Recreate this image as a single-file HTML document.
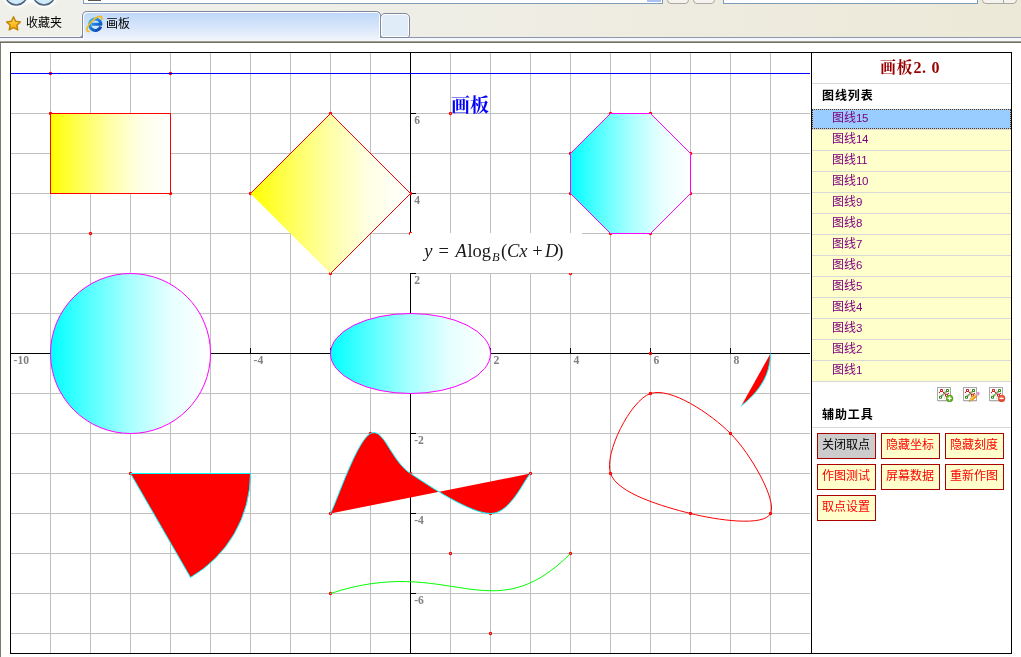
<!DOCTYPE html>
<html lang="zh-CN"><head><meta charset="utf-8"><title>画板</title>
<style>
html,body{margin:0;padding:0;background:#fff}
body{width:1021px;height:657px;position:relative;overflow:hidden;font-family:"Liberation Sans","Noto Sans CJK SC",sans-serif;font-size:12px;color:#000}
#wrap{position:absolute;left:0;top:0;width:1021px;height:657px;will-change:transform}
#cv{position:absolute;left:0;top:0}
.abs{position:absolute}
#tb{position:absolute;left:0;top:0;width:1021px;height:37px;background:linear-gradient(to right,#f0f0eb 0,#efeee6 40%,#ece9d8 100%)}
#l37{position:absolute;left:0;top:37px;width:1021px;height:1px;background:#8e96ae}
#l38{position:absolute;left:0;top:38px;width:1021px;height:3px;background:#f4f7fc}
#l41{position:absolute;left:0;top:41px;width:1021px;height:2px;background:linear-gradient(to bottom,#a5a291 0,#a5a291 1px,#716f64 1px)}
#lb{position:absolute;left:0;top:43px;width:1px;height:614px;background:#7b786c}
.inp{position:absolute;top:-11px;height:13px;background:#fff;border:1px solid #7f9db9}
.nb{position:absolute;top:-21px;height:23px;border:1px solid #a9a9a0;border-radius:4px;background:#f4f3ee}
.circ{position:absolute;top:-18.6px;width:22px;height:22px;border-radius:50%;border:1.5px solid #5a6b82;background:radial-gradient(circle at 50% 70%,#e8f8fd,#bfe3f4);box-shadow:0 0 2px 2px #fff}
#favbox{position:absolute;left:-2px;top:15px;width:83px;height:22px;border:1px solid #8088a0;border-top:none;border-radius:0 0 4px 0;box-shadow:inset -1px -1px 0 #f8f8f2}
#fav{position:absolute;left:26px;top:16.3px;font-size:12px;line-height:14px}
#tab{position:absolute;left:82px;top:11px;width:297px;height:29px;border:1px solid #8088a0;border-bottom:none;border-radius:5px 5px 0 0;background:linear-gradient(to bottom,#bdd7f9 0,#d6e5fa 50%,#f3f6fc 100%);box-shadow:inset 1px 1px 0 #fff,inset -1px 0 0 #fff}
#tab span{position:absolute;left:23px;top:5px;font-size:12px;line-height:14px}
#ntab{position:absolute;left:380px;top:13px;width:28px;height:23px;border:1px solid #8088a0;border-radius:5px 5px 3px 3px;background:#e1ecf9;box-shadow:inset 0 0 0 1px #fff}
.patch{position:absolute;top:38px;width:1px;height:3px;background:#f4f7fc}
#title{position:absolute;left:811px;top:57.8px;width:198px;text-align:center;font-family:"Liberation Serif","Noto Serif CJK SC",serif;font-weight:bold;font-size:16px;line-height:20px;color:#990000;letter-spacing:.5px}
#title i{font-style:normal;display:inline-block;width:9px;text-align:center;letter-spacing:0}
.hl{position:absolute;left:812px;width:199px;height:1px;background:#d8d8d8}
.hd{position:absolute;left:822px;font-weight:bold;font-size:12px;line-height:14px;letter-spacing:.9px}
#list{position:absolute;left:812px;top:109px;width:199px}
.it{height:20px;border-bottom:1px solid #d8d8d8;background:#ffffcc;color:#800080;line-height:18px;padding-left:20px;box-sizing:content-box;font-size:12px}
.it b{font-weight:normal;font-size:11.5px;letter-spacing:-.39px}
.it.sel{background:#99ccff;height:18px;border:1px dotted #663300;padding-left:19px;margin-bottom:1px;line-height:16px;box-shadow:0 1px 0 #d8d8d8}
.bt{position:absolute;width:56px;height:24px;padding-right:1px;border:1px solid #aa0000;background:#ffffcc;color:#ff0000;text-align:center;line-height:23px;font-size:12px}
.bt.g{background:#cccccc;color:#000}
</style></head><body><div id="wrap">
<svg id="cv" width="1021" height="657" viewBox="0 0 1021 657">
<defs>
<linearGradient id="gy" x1="0" y1="0" x2="1" y2="0"><stop offset="0" stop-color="#ffff00"/><stop offset=".25" stop-color="#ffff58"/><stop offset=".5" stop-color="#ffffa8"/><stop offset=".75" stop-color="#ffffe6"/><stop offset="1" stop-color="#ffffff"/></linearGradient>
<linearGradient id="gc" x1="0" y1="0" x2="1" y2="0"><stop offset="0" stop-color="#00ffff"/><stop offset=".25" stop-color="#58ffff"/><stop offset=".5" stop-color="#a8ffff"/><stop offset=".75" stop-color="#e6ffff"/><stop offset="1" stop-color="#ffffff"/></linearGradient>
</defs>
<path d="M50.5 53V653M90.5 53V653M130.5 53V653M170.5 53V653M210.5 53V653M250.5 53V653M290.5 53V653M330.5 53V653M370.5 53V653M450.5 53V653M490.5 53V653M530.5 53V653M570.5 53V653M610.5 53V653M650.5 53V653M690.5 53V653M730.5 53V653M770.5 53V653M11 113.5H810M11 153.5H810M11 193.5H810M11 233.5H810M11 273.5H810M11 313.5H810M11 393.5H810M11 433.5H810M11 473.5H810M11 513.5H810M11 553.5H810M11 593.5H810M11 633.5H810" stroke="#c0c0c0" stroke-width="1" fill="none" shape-rendering="crispEdges"/>
<path d="M11 353.5H810M410.5 53V653" stroke="#000" stroke-width="1" fill="none" shape-rendering="crispEdges"/>
<path d="M90.5 348V353M170.5 348V353M250.5 348V353M330.5 348V353M410.5 348V353M490.5 348V353M570.5 348V353M650.5 348V353M730.5 348V353M411 113.5H416M411 193.5H416M411 273.5H416M411 433.5H416M411 513.5H416M411 593.5H416" stroke="#000" stroke-width="1" fill="none" shape-rendering="crispEdges"/>
<g font-family="'Liberation Serif','Noto Serif CJK SC',serif" font-size="11.6" font-weight="bold" fill="#808080"><text x="13.6" y="363.9">-10</text><text x="93.6" y="363.9">-8</text><text x="173.6" y="363.9">-6</text><text x="253.6" y="363.9">-4</text><text x="333.6" y="363.9">-2</text><text x="493.6" y="363.9">2</text><text x="573.6" y="363.9">4</text><text x="653.6" y="363.9">6</text><text x="733.6" y="363.9">8</text><text x="414.2" y="123.8">6</text><text x="414.2" y="203.8">4</text><text x="414.2" y="283.8">2</text><text x="414.2" y="443.8">-2</text><text x="414.2" y="523.8">-4</text><text x="414.2" y="603.8">-6</text></g>
<g fill="none" stroke="#ff0000" stroke-width="1.2"><circle cx="50.5" cy="73.5" r="1.1"/><circle cx="170.5" cy="73.5" r="1.1"/><circle cx="50.5" cy="113.5" r="1.1"/><circle cx="170.5" cy="193.5" r="1.1"/><circle cx="90.5" cy="233.5" r="1.1"/><circle cx="250.5" cy="193.5" r="1.1"/><circle cx="330.5" cy="113.5" r="1.1"/><circle cx="410.5" cy="193.5" r="1.1"/><circle cx="330.5" cy="273.5" r="1.1"/><circle cx="450.5" cy="113.5" r="1.1"/><circle cx="610.5" cy="113.5" r="1.1"/><circle cx="650.5" cy="113.5" r="1.1"/><circle cx="690.5" cy="153.5" r="1.1"/><circle cx="690.5" cy="193.5" r="1.1"/><circle cx="650.5" cy="233.5" r="1.1"/><circle cx="610.5" cy="233.5" r="1.1"/><circle cx="570.5" cy="193.5" r="1.1"/><circle cx="570.5" cy="153.5" r="1.1"/><circle cx="410.5" cy="233.5" r="1.1"/><circle cx="570.5" cy="273.5" r="1.1"/><circle cx="650.5" cy="353.5" r="1.1"/><circle cx="650.5" cy="393.5" r="1.1"/><circle cx="730.5" cy="433.5" r="1.1"/><circle cx="770.5" cy="513.5" r="1.1"/><circle cx="690.5" cy="513.5" r="1.1"/><circle cx="610.5" cy="473.5" r="1.1"/><circle cx="130.5" cy="473.5" r="1.1"/><circle cx="330.5" cy="513.5" r="1.1"/><circle cx="370.5" cy="433.5" r="1.1"/><circle cx="410.5" cy="473.5" r="1.1"/><circle cx="490.5" cy="513.5" r="1.1"/><circle cx="530.5" cy="473.5" r="1.1"/><circle cx="330.5" cy="593.5" r="1.1"/><circle cx="450.5" cy="553.5" r="1.1"/><circle cx="490.5" cy="633.5" r="1.1"/><circle cx="570.5" cy="553.5" r="1.1"/></g>
<path d="M11 73.5H810" stroke="#0000ff" fill="none" shape-rendering="crispEdges"/>
<rect x="50.5" y="113.5" width="120" height="80" fill="url(#gy)" stroke="#ff0000" shape-rendering="crispEdges"/>
<path d="M250.5 193.5L330.5 113.5L410.5 193.5L330.5 273.5Z" fill="url(#gy)"/>
<path d="M250.5 193.5L330.5 113.5L410.5 193.5L330.5 273.5" fill="none" stroke="#ff0000"/>
<path d="M610.5 113.5H650.5L690.5 153.5V193.5L650.5 233.5H610.5L570.5 193.5V153.5Z" fill="url(#gc)" stroke="#ff00ff"/>
<circle cx="130.5" cy="353.5" r="80" fill="url(#gc)" stroke="#ff00ff"/>
<ellipse cx="410.5" cy="353.5" rx="80" ry="40" fill="url(#gc)" stroke="#ff00ff"/>
<rect x="410" y="233" width="172" height="40" fill="#fff"/>
<g font-family="'Liberation Serif',serif" font-size="18.5" fill="#1a1a1a"><text y="257.3"><tspan x="424.3" font-style="italic">y</tspan><tspan x="438.6">=</tspan><tspan x="455.6" font-style="italic">A</tspan><tspan x="467.4">log</tspan><tspan x="492" y="261.2" font-size="12.5" font-style="italic">B</tspan><tspan x="501" y="257.3">(</tspan><tspan x="507" font-style="italic">Cx</tspan><tspan x="532.3">+</tspan><tspan x="545" font-style="italic">D</tspan><tspan x="557.2">)</tspan></text></g>
<path d="M130.5 473.5H250.5A120 120 0 0 1 190.5 577.42Z" fill="#ff0000" stroke="#00ffff" stroke-width="1"/>
<path d="M330.5 513.5 C337.17 500.17 357.17 440.17 370.5 433.5 C383.83 426.83 390.5 460.17 410.5 473.5 C430.5 486.83 470.5 513.5 490.5 513.5 C510.5 513.5 523.83 480.17 530.5 473.5Z" fill="#ff0000"/>
<path d="M330.5 513.5 C337.17 500.17 357.17 440.17 370.5 433.5 C383.83 426.83 390.5 460.17 410.5 473.5 C430.5 486.83 470.5 513.5 490.5 513.5 C510.5 513.5 523.83 480.17 530.5 473.5" fill="none" stroke="#00ffff"/>
<path d="M650.5 393.5 C670.5 386.83 710.5 413.5 730.5 433.5 C750.5 453.5 777.17 500.17 770.5 513.5 C763.83 526.83 717.17 520.17 690.5 513.5 C663.83 506.83 617.17 493.5 610.5 473.5 C603.83 453.5 630.5 400.17 650.5 393.5Z" fill="none" stroke="#ff0000"/>
<path d="M770.5 353.5A120 80 0 0 1 741.2 405.88Z" fill="#ff0000"/>
<path d="M770.5 353.5A120 80 0 0 1 741.2 405.88" fill="none" stroke="#00ffff"/>
<path d="M330.5 593.5C450.5 553.5 490.5 633.5 570.5 553.5" fill="none" stroke="#00ff00"/>
<text x="451" y="112" font-family="'Liberation Serif','Noto Serif CJK SC',serif" font-size="19" font-weight="bold" fill="#0000ff">画板</text>
<path d="M10.5 52.5H1011.5V653.5H10.5ZM811.5 52.5V653.5" fill="none" stroke="#000" shape-rendering="crispEdges"/>
</svg>
<div id="tb">
<svg class="abs" style="left:0;top:0" width="70" height="12" viewBox="0 0 70 12"><defs><filter id="bl" x="-20%" y="-20%" width="140%" height="140%"><feGaussianBlur stdDeviation="1.2"/></filter></defs><g filter="url(#bl)" fill="#fff" opacity=".9"><circle cx="16.2" cy="-6.3" r="14"/><circle cx="44" cy="-6.3" r="14"/><rect x="16" y="-6" width="28" height="9"/></g><g fill="#cdebf8" stroke="#51647f" stroke-width="1.5"><circle cx="16.2" cy="-6.3" r="11.2"/><circle cx="44" cy="-6.3" r="11.2"/></g></svg>
<div class="inp" style="left:83px;width:578px"><div class="abs" style="left:4px;top:10px;width:13px;height:1px;background:#555"></div><div class="abs" style="left:563px;top:10px;width:14px;height:2px;background:#a9c1f2"></div></div>
<div class="nb" style="left:667px;width:20px"></div><div class="nb" style="left:693px;width:20px"></div>
<div class="inp" style="left:723px;width:253px"></div>
<div class="nb" style="left:982px;width:33px"><div class="abs" style="left:20px;top:0;width:1px;height:23px;background:#a9a9a0"></div></div>
</div>
<div id="l37"></div><div id="l38"></div>
<div id="favbox"></div>
<svg class="abs" style="left:2px;top:12px" width="24" height="24" viewBox="0 0 24 24"><defs><linearGradient id="sg" x1="0" y1="0" x2="0" y2="1"><stop offset="0" stop-color="#ffe98a"/><stop offset=".45" stop-color="#ffc533"/><stop offset="1" stop-color="#ffa000"/></linearGradient></defs><path d="M11.50 4.90L13.56 9.27L18.35 9.88L14.83 13.18L15.73 17.92L11.50 15.60L7.27 17.92L8.17 13.18L4.65 9.88L9.44 9.27Z" fill="url(#sg)" stroke="#c0860a" stroke-width="1.5" stroke-linejoin="round"/></svg>
<div id="fav">收藏夹</div>
<div id="tab"><svg class="abs" style="left:1px;top:1.4px" width="22" height="22" viewBox="0 0 22 22"><defs><linearGradient id="eg" x1="0" y1="0" x2="1" y2="1"><stop offset="0" stop-color="#35b4f8"/><stop offset=".5" stop-color="#1679dc"/><stop offset="1" stop-color="#0a3aa5"/></linearGradient></defs>
<path d="M16.7 13.6A5.7 5.7 0 1 1 17 11.2H7.6" fill="none" stroke="url(#eg)" stroke-width="3" stroke-linejoin="round"/>
<ellipse cx="10.4" cy="10.9" rx="10" ry="3.7" transform="rotate(-45 10.4 10.9)" fill="none" stroke="#f5b918" stroke-width="1.7" stroke-dasharray="3.5 16.5 27.6"/></svg><span>画板</span></div>
<div id="ntab"></div><div class="patch" style="left:82px"></div><div class="patch" style="left:380px"></div>
<div id="l41"></div><div id="lb"></div>
<div id="title">画板<i>2</i><i style="text-align:left">.</i><i>0</i></div>
<div class="hl" style="top:83px"></div>
<div class="hd" style="top:88.5px">图线列表</div>
<div id="list"><div class="it sel">图线<b>15</b></div><div class="it">图线<b>14</b></div><div class="it">图线<b>11</b></div><div class="it">图线<b>10</b></div><div class="it">图线<b>9</b></div><div class="it">图线<b>8</b></div><div class="it">图线<b>7</b></div><div class="it">图线<b>6</b></div><div class="it">图线<b>5</b></div><div class="it">图线<b>4</b></div><div class="it">图线<b>3</b></div><div class="it">图线<b>2</b></div><div class="it">图线<b>1</b></div></div>
<svg style="position:absolute;left:935px;top:385px" width="20" height="20" viewBox="0 0 20 20"><rect x="2.5" y="2.5" width="13" height="13" fill="#fff" stroke="#a9a9a9"/><path d="M3 16.4H15.6" stroke="#d4d4d4" stroke-width=".7"/>
<path d="M9.5 4V8M4.5 9.5H7.5M9.5 11.5V14" stroke="#e2e2e6" stroke-width="1" fill="none"/>
<path d="M4.4 7.5L6.5 5.5L8.5 7.5L11.4 10.2L13.4 8.4" stroke="#e05050" stroke-width=".8" fill="none"/>
<path d="M5.5 12.3L12.5 5.5" stroke="#2a7a10" stroke-width="1.25" stroke-dasharray="1.1 .35" fill="none"/>
<rect x="5" y="4" width="3" height="3" rx=".8" fill="#d11f1f"/><rect x="6" y="5" width="1" height="1" fill="#fff"/>
<rect x="11" y="4" width="3" height="3" rx=".8" fill="#2e8b12"/><rect x="12" y="5" width="1" height="1" fill="#fff"/>
<rect x="4" y="10.8" width="3" height="3" rx=".8" fill="#2e8b12"/><rect x="5" y="11.8" width="1" height="1" fill="#fff"/>
<rect x="10" y="8.8" width="3" height="3" rx=".8" fill="#d11f1f"/><rect x="11" y="9.8" width="1" height="1" fill="#fff"/>
<g fill="#d11f1f"><circle cx="4.4" cy="7.5" r=".65"/><circle cx="8.5" cy="7.5" r=".65"/><circle cx="13.4" cy="8.4" r=".65"/></g><circle cx="14.6" cy="13.4" r="3.35" fill="#5aa81a" stroke="#3f8a0e" stroke-width=".5"/><circle cx="14.3" cy="12.6" r="2.2" fill="#86cc2e" opacity=".7"/><path d="M14.6 11.4V15.4M12.6 13.4H16.6" stroke="#fff" stroke-width="1.3"/></svg><svg style="position:absolute;left:961px;top:385px" width="20" height="20" viewBox="0 0 20 20"><rect x="2.5" y="2.5" width="13" height="13" fill="#fff" stroke="#a9a9a9"/><path d="M3 16.4H15.6" stroke="#d4d4d4" stroke-width=".7"/>
<path d="M9.5 4V8M4.5 9.5H7.5M9.5 11.5V14" stroke="#e2e2e6" stroke-width="1" fill="none"/>
<path d="M4.4 7.5L6.5 5.5L8.5 7.5L11.4 10.2L13.4 8.4" stroke="#e05050" stroke-width=".8" fill="none"/>
<path d="M5.5 12.3L12.5 5.5" stroke="#2a7a10" stroke-width="1.25" stroke-dasharray="1.1 .35" fill="none"/>
<rect x="5" y="4" width="3" height="3" rx=".8" fill="#d11f1f"/><rect x="6" y="5" width="1" height="1" fill="#fff"/>
<rect x="11" y="4" width="3" height="3" rx=".8" fill="#2e8b12"/><rect x="12" y="5" width="1" height="1" fill="#fff"/>
<rect x="4" y="10.8" width="3" height="3" rx=".8" fill="#2e8b12"/><rect x="5" y="11.8" width="1" height="1" fill="#fff"/>
<rect x="10" y="8.8" width="3" height="3" rx=".8" fill="#d11f1f"/><rect x="11" y="9.8" width="1" height="1" fill="#fff"/>
<g fill="#d11f1f"><circle cx="4.4" cy="7.5" r=".65"/><circle cx="8.5" cy="7.5" r=".65"/><circle cx="13.4" cy="8.4" r=".65"/></g><path d="M8.2 16.4L10.84 16.09L8.88 13.83Z" fill="#c89a5a"/><path d="M8.2 16.4L9.2 16.2L8.5 15.4Z" fill="#5a3a1a"/><path d="M10.84 16.09L16.35 11.31L14.39 9.05L8.88 13.83Z" fill="#f5a21e"/><path d="M9.6 14.6L15.1 9.9" stroke="#ffd878" stroke-width=".9"/><path d="M10.6 15.7L16.1 11" stroke="#d8820a" stroke-width=".7"/><path d="M16.35 11.31L17.33 10.46L15.37 8.2L14.39 9.05Z" fill="#b4b8c4"/><path d="M17.33 10.46L18.7 9.2Q19.2 8 18.2 7.2Q17.4 6.4 16.7 7L15.37 8.2Z" fill="#e590d4"/></svg><svg style="position:absolute;left:987px;top:385px" width="20" height="20" viewBox="0 0 20 20"><rect x="2.5" y="2.5" width="13" height="13" fill="#fff" stroke="#a9a9a9"/><path d="M3 16.4H15.6" stroke="#d4d4d4" stroke-width=".7"/>
<path d="M9.5 4V8M4.5 9.5H7.5M9.5 11.5V14" stroke="#e2e2e6" stroke-width="1" fill="none"/>
<path d="M4.4 7.5L6.5 5.5L8.5 7.5L11.4 10.2L13.4 8.4" stroke="#e05050" stroke-width=".8" fill="none"/>
<path d="M5.5 12.3L12.5 5.5" stroke="#2a7a10" stroke-width="1.25" stroke-dasharray="1.1 .35" fill="none"/>
<rect x="5" y="4" width="3" height="3" rx=".8" fill="#d11f1f"/><rect x="6" y="5" width="1" height="1" fill="#fff"/>
<rect x="11" y="4" width="3" height="3" rx=".8" fill="#2e8b12"/><rect x="12" y="5" width="1" height="1" fill="#fff"/>
<rect x="4" y="10.8" width="3" height="3" rx=".8" fill="#2e8b12"/><rect x="5" y="11.8" width="1" height="1" fill="#fff"/>
<rect x="10" y="8.8" width="3" height="3" rx=".8" fill="#d11f1f"/><rect x="11" y="9.8" width="1" height="1" fill="#fff"/>
<g fill="#d11f1f"><circle cx="4.4" cy="7.5" r=".65"/><circle cx="8.5" cy="7.5" r=".65"/><circle cx="13.4" cy="8.4" r=".65"/></g><circle cx="14.6" cy="13.4" r="3.35" fill="#e4472a" stroke="#c03318" stroke-width=".5"/><circle cx="14.4" cy="12.4" r="2.2" fill="#f47a5a" opacity=".6"/><path d="M12.6 13.4H16.6" stroke="#fff" stroke-width="1.4"/></svg>
<div class="hd" style="top:407.7px">辅助工具</div>
<div class="hl" style="top:427px"></div>
<div class="bt g" style="left:817px;top:433px">关闭取点</div><div class="bt" style="left:881px;top:433px">隐藏坐标</div><div class="bt" style="left:945px;top:433px">隐藏刻度</div><div class="bt" style="left:817px;top:464px">作图测试</div><div class="bt" style="left:881px;top:464px">屏幕数据</div><div class="bt" style="left:945px;top:464px">重新作图</div><div class="bt" style="left:817px;top:495px">取点设置</div>
</div></body></html>
